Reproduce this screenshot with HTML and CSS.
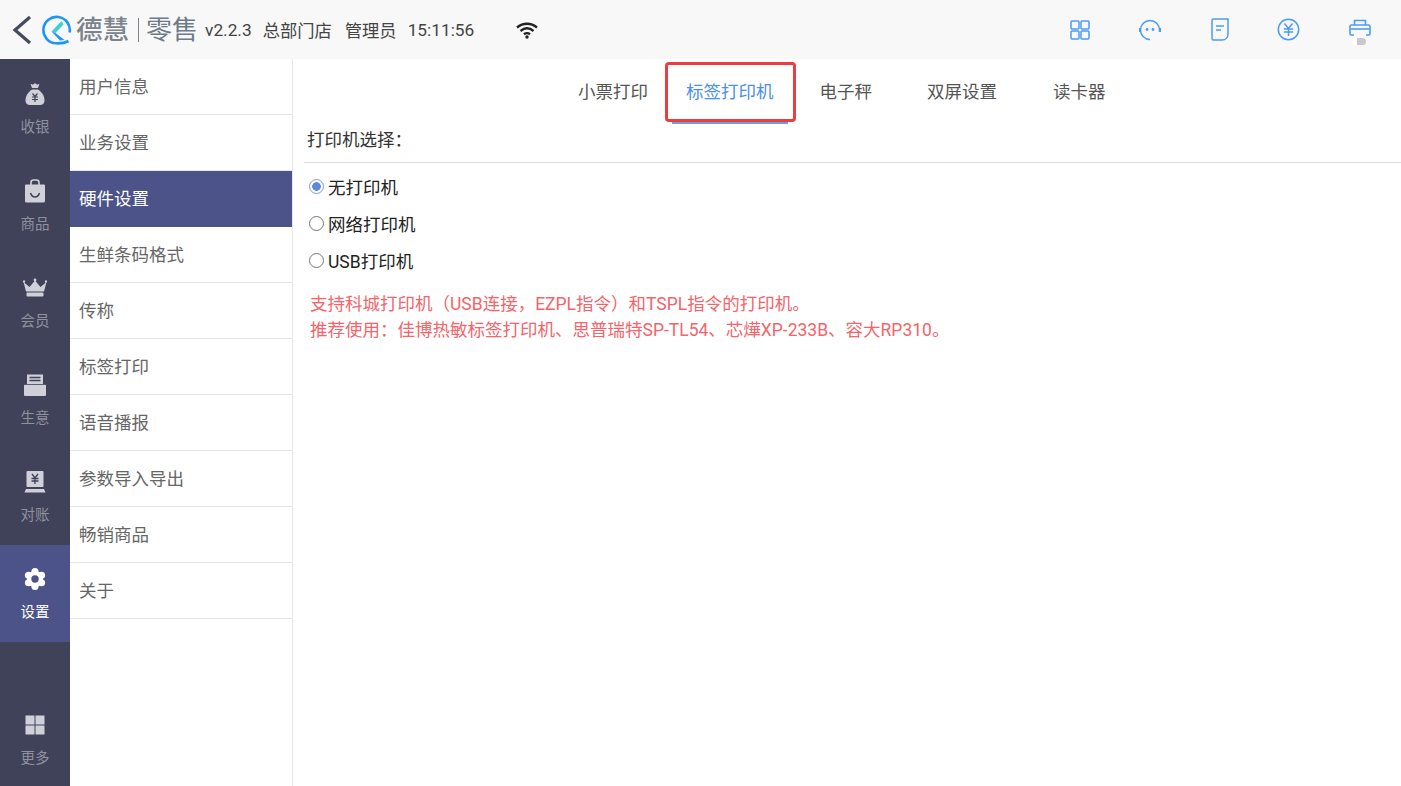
FILE: index.html
```html
<!DOCTYPE html>
<html lang="zh-CN">
<head>
<meta charset="utf-8">
<title>硬件设置</title>
<link rel="stylesheet" href="styles.css">
</head>
<body>
<div class="app">
  <header class="topbar">
    <svg class="back" width="22" height="30" viewBox="0 0 22 30"><path d="M19 2 4 15l15 13" fill="none" stroke="#454b5e" stroke-width="3.2"/></svg>
    <svg class="logo" width="30" height="30" viewBox="0 0 30 30"><path d="M27.600 17.500A13.200 13.200 0 1 0 14 28.300C18 28.500 22.500 28.300 26.500 26" fill="none" stroke="#1f97f2" stroke-width="2.600"/><path d="M19.500 6 9.500 16.500l4 1.500 8-8.500z" fill="#3fcfd0"/><path d="M9.500 16.500 18 25.500l4.500-.5-9-7z" fill="#1f97f2"/></svg>
    <span class="brand">德慧</span>
    <span class="brand-sep"></span>
    <span class="brand brand-b">零售</span>
    <span class="meta m-ver">v2.2.3</span>
    <span class="meta m-store">总部门店</span>
    <span class="meta m-user">管理员</span>
    <span class="meta m-time">15:11:56</span>
    <svg class="wifi" width="22" height="18" viewBox="0 0 22 18"><path d="M1 6.500c6-5 14-5 20 0M4.500 10c4-3.300 9-3.300 13 0M8 13.300c1.800-1.400 4.200-1.400 6 0" fill="none" stroke="#222" stroke-width="2.400"/><circle cx="11" cy="16" r="1.700" fill="#222"/></svg>
    <div class="tools">
      <svg width="20" height="20" viewBox="0 0 20 20" fill="none" stroke="#4d9bf5" stroke-width="1.500"><rect x="1" y="1" width="8" height="8" rx="1"/><rect x="11" y="1" width="8" height="8" rx="1"/><rect x="1" y="11" width="8" height="8" rx="1"/><rect x="11" y="11" width="8" height="8" rx="1"/></svg>
      <svg width="22" height="22" viewBox="0 0 22 22" fill="none" stroke="#4d9bf5" stroke-width="1.500"><path d="M11 20.500A9.500 9.500 0 1 1 20.500 11c0 .6 0 1.200-.2 1.800"/><path d="M1 9v4M21 9v4" stroke-width="2"/><circle cx="8" cy="10.500" r="1.400" fill="#4d9bf5" stroke="none"/><circle cx="14" cy="10.500" r="1.400" fill="#4d9bf5" stroke="none"/></svg>
      <svg class="doc-icon" width="18" height="23" viewBox="0 0 18 23" fill="none" stroke="#4d9bf5" stroke-width="1.500"><path d="M2.500 1H17v15c0 3.500-2.500 6-6 6H2.500A1.500 1.500 0 0 1 1 20.500v-18A1.500 1.500 0 0 1 2.500 1z"/><path d="M5 8h8M5 12h5"/></svg>
      <svg width="23" height="23" viewBox="0 0 23 23" fill="none" stroke="#4d9bf5" stroke-width="1.500"><circle cx="11.500" cy="11.500" r="10.200"/><path d="m7.500 5.500 4 5 4-5M6.800 11h9.400M6.800 14h9.400M11.500 10.500V18"/></svg>
      <span class="printer-tool">
        <svg width="22" height="22" viewBox="0 0 22 22" fill="none" stroke="#4d9bf5" stroke-width="1.600"><path d="M5.500 6V1.500h11V6"/><path d="M5 16H2.500A1.500 1.500 0 0 1 1 14.500V7.500A1.500 1.500 0 0 1 2.500 6h17A1.500 1.500 0 0 1 21 7.500v7a1.500 1.500 0 0 1-1.500 1.500H17"/><path d="M1.500 10h19"/></svg>
        <span class="toggle"></span>
      </span>
    </div>
  </header>

  <div class="body">
    <nav class="rail">
      <a class="rail-item">
        <svg class="rail-icon" viewBox="0 0 24 24"><path d="M12 1l2 1.800 2.500-1-1.500 4.200H9L7.500 1.800l2.500 1z" fill="#d0d1d8"/><path d="M9 7.500h6c4 2.500 6.500 6.500 6.500 11 0 3-2 4.500-4.500 4.500H7c-2.500 0-4.500-1.500-4.500-4.500 0-4.500 2.500-8.500 6.500-11z" fill="#d0d1d8"/><path d="m9.500 11.500 2.500 3 2.500-3M9 15h6M9 17.500h6M12 14.500V20" fill="none" stroke="#3f4258" stroke-width="1.200"/></svg>
        <span>收银</span>
      </a>
      <a class="rail-item">
        <svg class="rail-icon" viewBox="0 0 24 24"><path d="M8 6V3.500C8 2 9 1 10.500 1h3C15 1 16 2 16 3.500V6" fill="none" stroke="#d0d1d8" stroke-width="1.600"/><path d="M3 5.500h18a1 1 0 0 1 1 1V22a1.500 1.500 0 0 1-1.500 1.500h-17A1.500 1.500 0 0 1 2 22V6.500a1 1 0 0 1 1-1z" fill="#d0d1d8"/><path d="M7.500 14c1 3 3 4 4.500 4s3.500-1 4.500-4" fill="none" stroke="#3f4258" stroke-width="1.500"/></svg>
        <span>商品</span>
      </a>
      <a class="rail-item">
        <svg class="rail-icon" viewBox="0 0 24 24"><path d="M.5 6 6.500 11 12 4.500 17.500 11l6-5-2.500 9.500H3z" fill="#d0d1d8"/><rect x="3.500" y="16.500" width="17" height="4" rx="1" fill="#d0d1d8"/><circle cx="1" cy="5.500" r="1.200" fill="#d0d1d8"/><circle cx="23" cy="5.500" r="1.200" fill="#d0d1d8"/><circle cx="12" cy="4" r="1.400" fill="#d0d1d8"/></svg>
        <span>会员</span>
      </a>
      <a class="rail-item">
        <svg class="rail-icon" viewBox="0 0 24 24"><path d="M4 1.500h16V12H4z" fill="#d0d1d8"/><path d="M6.500 4.500h11M6.500 7.500h11" stroke="#3f4258" stroke-width="1.300"/><path d="M2.500 11h19A1.500 1.500 0 0 1 23 12.500V22a1 1 0 0 1-1 1H2a1 1 0 0 1-1-1v-9.500A1.500 1.500 0 0 1 2.500 11z" fill="#d0d1d8"/><path d="M1 11.500h22" stroke="#3f4258" stroke-width=".8"/></svg>
        <span>生意</span>
      </a>
      <a class="rail-item">
        <svg class="rail-icon" viewBox="0 0 24 24"><rect x="3.500" y="1" width="17" height="16" rx="1" fill="#d0d1d8"/><path d="m9 4 3 4 3-4M8.500 8.500h7M8.500 11h7M12 8v6" fill="none" stroke="#3f4258" stroke-width="1.300"/><path d="M3 19h18l1.500 3.500h-21z" fill="#d0d1d8"/></svg>
        <span>对账</span>
      </a>
      <a class="rail-item rail-active">
        <svg class="rail-icon" viewBox="0 0 24 24"><g fill="#fff"><circle cx="12" cy="12" r="8"/><circle cx="12" cy="4.500" r="3.600"/><circle cx="18.500" cy="8.250" r="3.600"/><circle cx="18.500" cy="15.750" r="3.600"/><circle cx="12" cy="19.500" r="3.600"/><circle cx="5.500" cy="15.750" r="3.600"/><circle cx="5.500" cy="8.250" r="3.600"/></g><circle cx="12" cy="12" r="3.700" fill="#4c5388"/></svg>
        <span>设置</span>
      </a>
      <a class="rail-item rail-more">
        <svg class="rail-icon" viewBox="0 0 24 24"><rect x="2.500" y="2.500" width="9" height="9" fill="#d0d1d8"/><rect x="12.500" y="2.500" width="9" height="9" fill="#d0d1d8"/><rect x="2.500" y="12.500" width="9" height="9" fill="#d0d1d8"/><rect x="12.500" y="12.500" width="9" height="9" fill="#d0d1d8"/></svg>
        <span>更多</span>
      </a>
    </nav>

    <aside class="submenu">
      <a class="sub-item">用户信息</a>
      <a class="sub-item">业务设置</a>
      <a class="sub-item sub-active">硬件设置</a>
      <a class="sub-item">生鲜条码格式</a>
      <a class="sub-item">传称</a>
      <a class="sub-item">标签打印</a>
      <a class="sub-item">语音播报</a>
      <a class="sub-item">参数导入导出</a>
      <a class="sub-item">畅销商品</a>
      <a class="sub-item">关于</a>
    </aside>

    <main class="content">
      <div class="tabs">
        <a class="tab tab-a">小票打印</a>
        <a class="tab tab-b tab-active">标签打印机<span class="annot"></span></a>
        <a class="tab tab-c">电子秤</a>
        <a class="tab tab-d">双屏设置</a>
        <a class="tab tab-e">读卡器</a>
      </div>
      <div class="section-title">打印机选择：</div>
      <div class="options">
        <label class="option"><span class="radio radio-on"></span>无打印机</label>
        <label class="option"><span class="radio"></span>网络打印机</label>
        <label class="option"><span class="radio"></span>USB打印机</label>
      </div>
      <p class="note">支持科城打印机（USB连接，EZPL指令）和TSPL指令的打印机。<br>推荐使用：佳博热敏标签打印机、思普瑞特SP-TL54、芯燁XP-233B、容大RP310。</p>
    </main>
  </div>
</div>
</body>
</html>
```

FILE: styles.css
```css
* { box-sizing: border-box; }
html, body { margin: 0; height: 100%; overflow: hidden; }
body {
  font-family: Roboto, "Noto Sans CJK SC", sans-serif;
  background: #fff;
  color: #333;
}
.app { display: flex; flex-direction: column; width: 1401px; height: 786px; }

.topbar {
  display: flex;
  align-items: center;
  height: 59px;
  flex: none;
  background: #f8f8f8;
  padding-left: 11px;
}
.back { flex: none; }
.logo { margin-left: 9px; flex: none; }
.brand { font-size: 26.5px; line-height: 30px; color: #7b838c; margin-left: 4px; font-weight: 500; }
.brand-b { margin-left: 7px; color: #6d7a8a; font-weight: 400; font-size: 26px; }
.brand-sep { width: 1px; height: 24px; background: #7b838c; margin-left: 9px; }
.meta { font-size: 17.3px; color: #444; white-space: nowrap; }
.m-ver { margin-left: 7px; }
.m-store { margin-left: 11px; }
.m-user { margin-left: 13px; }
.m-time { margin-left: 11px; }
.wifi { margin-left: 42px; flex: none; }
.tools {
  margin-left: auto;
  width: 351px;
  padding: 0 30px 0 20px;
  display: flex;
  align-items: center;
  justify-content: space-between;
}
.doc-icon { margin-left: 1px; }
.printer-tool { position: relative; display: flex; }
.toggle {
  position: absolute;
  left: 3px;
  bottom: -4px;
  width: 14px;
  height: 7px;
  border-radius: 4px;
  background: #c9c9c9;
  border-left: 5px solid #fff;
}

.body { display: flex; flex: 1; min-height: 0; }

.rail {
  width: 70px;
  flex: none;
  display: flex;
  flex-direction: column;
  padding-top: 1px;
  background: #3f4258;
}
.rail-item {
  height: 97px;
  flex: none;
  display: flex;
  flex-direction: column;
  align-items: center;
  padding-top: 22px;
  color: #8f919f;
  font-size: 14.5px;
  line-height: 20px;
}
.rail-icon { width: 24px; height: 24px; margin-bottom: 12px; flex: none; }
.rail-active { background: #4c5388; color: #fff; }
.rail-more { margin-top: auto; padding-top: 24px; }

.submenu {
  width: 223px;
  flex: none;
  background: #fff;
  border-right: 1px solid #e8e8e8;
}
.sub-item {
  display: flex;
  align-items: center;
  height: 56px;
  padding: 0 0 3px 9px;
  border-bottom: 1px solid #e6e6e6;
  font-size: 17.5px;
  color: #666;
}
.sub-active { background: #4c5388; color: #fff; border-bottom-color: #4c5388; }

.content { flex: 1; min-width: 0; padding-left: 11px; }
.tabs { display: flex; height: 65px; padding-left: 274px; }
.tab {
  position: relative;
  display: flex;
  align-items: center;
  height: 65px;
  padding-bottom: 3px;
  font-size: 17.5px;
  color: #555;
  white-space: nowrap;
}
.tab-b { margin-left: 38px; }
.tab-c { margin-left: 46px; }
.tab-d { margin-left: 55px; }
.tab-e { margin-left: 56px; }
.tab-active { color: #4a90e8; }
.tab-active::after {
  content: "";
  position: absolute;
  left: -14px;
  right: -14px;
  bottom: 0;
  height: 2px;
  background: #6f9be0;
}
.annot {
  position: absolute;
  left: -21px;
  right: -22px;
  top: 3px;
  height: 60px;
  border: 3px solid #ee3d3f;
  border-radius: 4px;
}

.section-title {
  height: 39px;
  padding: 3px 0 0 3px;
  line-height: 26px;
  font-size: 17.5px;
  color: #333;
  border-bottom: 1px solid #e0e0e0;
}
.options { display: flex; flex-direction: column; gap: 11px; padding: 10px 0 0 5px; }
.option {
  display: flex;
  align-items: center;
  height: 26px;
  font-size: 17.5px;
  color: #222;
  white-space: nowrap;
}
.radio {
  width: 15px;
  height: 15px;
  flex: none;
  margin-right: 4px;
  border-radius: 50%;
  border: 1.5px solid #777;
  background: #fff;
}
.radio-on {
  border-color: #7c9be4;
  background: radial-gradient(circle, #5f86e0 0 4px, #fff 4.6px);
}
.note {
  margin: 18px 0 0 6px;
  font-size: 17.5px;
  line-height: 26px;
  color: #f4646a;
  white-space: nowrap;
}
```
